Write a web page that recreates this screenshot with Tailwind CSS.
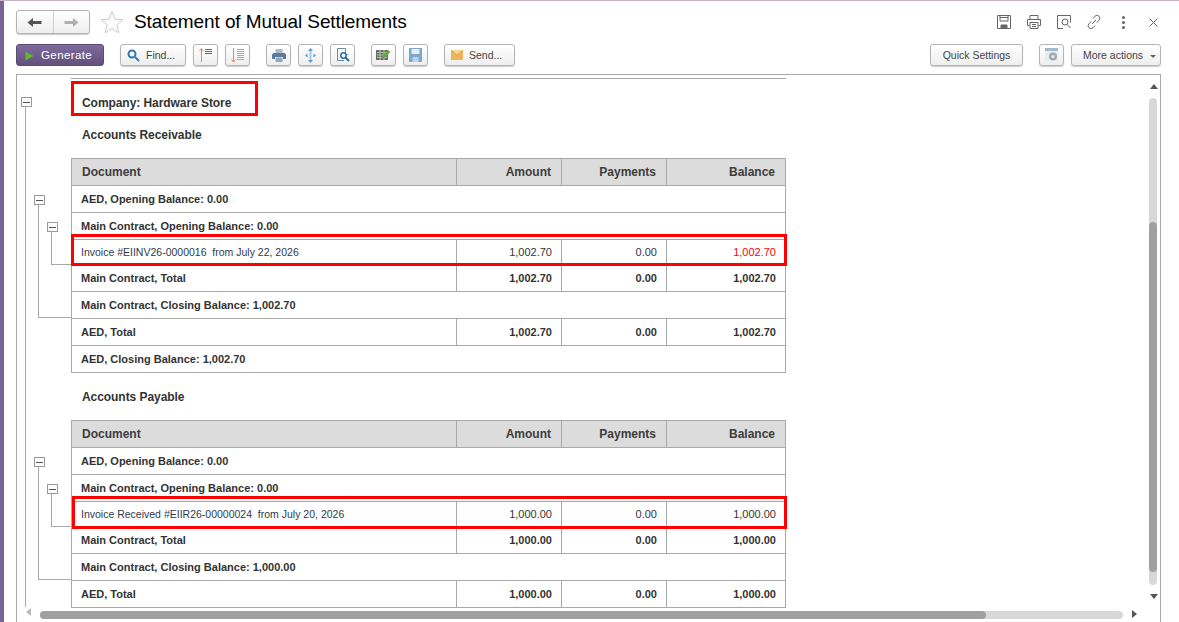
<!DOCTYPE html>
<html lang="en">
<head>
<meta charset="UTF-8">
<title>Statement of Mutual Settlements</title>
<script src="https://cdn.jsdelivr.net/npm/@tailwindcss/browser@4"></script>
</head>
<body class="bg-white">
<div class="relative flex h-[622px] w-[1179px] overflow-hidden border-t border-[#c9b4c2] bg-white font-['Liberation_Sans',Arial,sans-serif] text-[#333]">
  <div class="w-[4px] shrink-0 bg-[#7a6496]"></div>

  <div class="flex min-w-0 flex-1 flex-col pl-3 pr-[18px]">
    <!-- title bar -->
    <div class="flex h-[43px] shrink-0 items-start pt-[9px]">
      <div class="flex h-[24px] w-[74px] rounded-[3px] border border-[#b4b4b4] bg-linear-to-b from-white to-[#eeeeee] shadow-[0_1px_1px_rgba(0,0,0,.2)]">
        <div class="flex w-[37px] items-center justify-center border-r border-[#cfcfcf] pr-[1px]">
          <svg width="15" height="11" viewBox="0 0 15 11"><path d="M0.500 5.500L6 1v3h8.500v3H6v3z" fill="#555"/></svg>
        </div>
        <div class="flex flex-1 items-center justify-center">
          <svg width="15" height="11" viewBox="0 0 15 11"><path d="M14.500 5.500L9 1v3H0.500v3H9v3z" fill="#b0b0b0"/></svg>
        </div>
      </div>
      <svg class="ml-[10px]" width="24" height="24" viewBox="0 0 24 24"><path d="M12 1.500l3 7.600 8 .6-6.200 5.200 2 8-6.800-4.300-6.800 4.300 2-8L1 9.700l8-.6z" fill="#fff" stroke="#c6ccd2"/></svg>
      <h1 class="-mt-px ml-[10px] text-[19px] leading-[26px] font-normal tracking-[-0.100px] text-black">Statement of Mutual Settlements</h1>
      <div class="ml-auto mr-[-1px] flex items-center gap-[14px] pt-[4px]">
        <svg width="16" height="16" viewBox="0 0 16 16" fill="none" stroke="#666"><path d="M1.500 1.500h13v13h-13z"/><path d="M4 1.500v5.500h8V1.500M4 3.500h8"/><path d="M5 11h6v3.500H5z" fill="#666"/></svg>
        <svg width="16" height="16" viewBox="0 0 16 16" fill="none" stroke="#666"><path d="M4 5V1.500h8V5M3.500 11.500h-2v-6h13v6h-2"/><path d="M4 8.500h8v6H4zM6 10.500h4M6 12.500h4"/></svg>
        <svg width="16" height="16" viewBox="0 0 16 16" fill="none" stroke="#666"><path d="M7 14.500H1.500v-13h13v7"/><circle cx="9" cy="8" r="3"/><path d="M11 10.500l3.500 3.500"/></svg>
        <svg width="16" height="16" viewBox="0 0 16 16" fill="none" stroke="#666"><path d="M6 10l4-4M7 4.500l2-2.300c1.500-1.300 3-1 4 0s1.300 2.500 0 4l-2.200 2.300M9 11.500l-2 2.300c-1.500 1.300-3 1-4 0s-1.300-2.500 0-4l2.200-2.300"/></svg>
        <div class="ml-[3px] flex w-[8px] flex-col items-center gap-[2px]">
          <span class="h-[3px] w-[3px] rounded-full bg-[#666]"></span>
          <span class="h-[3px] w-[3px] rounded-full bg-[#666]"></span>
          <span class="h-[3px] w-[3px] rounded-full bg-[#666]"></span>
        </div>
        <svg class="ml-[8px] mr-[4px]" width="9" height="9" viewBox="0 0 9 9" stroke="#666"><path d="M.5.500l8 8M8.500.500l-8 8"/></svg>
      </div>
    </div>

    <!-- toolbar -->
    <div class="flex h-[22px] shrink-0 items-stretch text-[10.500px] text-[#444]">
      <button class="flex w-[88px] items-center rounded-[3px] border border-[#5c4a78] bg-linear-to-b from-[#7f6a9c] to-[#64507f] pl-[8px] pt-[1px] text-[11.500px] tracking-[0.400px] text-white">
        <svg width="9" height="10" viewBox="0 0 9 10"><path d="M0.500 0.500L8.500 5L0.500 9.500z" fill="#5fb52c"/></svg>
        <span class="ml-[7px]">Generate</span>
      </button>
      <button class="ml-[16px] flex w-[66px] items-center rounded-[3px] border border-[#b4b4b4] bg-linear-to-b from-white to-[#eeeeee] pl-[6px] shadow-[0_1px_1px_rgba(0,0,0,.2)]">
        <svg width="13" height="13" viewBox="0 0 13 13" fill="none" stroke="#2f78b4" stroke-width="2"><circle cx="5" cy="5" r="3.500"/><path d="M8 8l4 4"/></svg>
        <span class="ml-[6px] pt-[2px]">Find...</span>
      </button>
      <button class="ml-[7px] flex w-[25px] items-center justify-center rounded-[3px] border border-[#b4b4b4] bg-linear-to-b from-white to-[#eeeeee] shadow-[0_1px_1px_rgba(0,0,0,.2)]">
        <svg width="13" height="14" viewBox="0 0 13 14" fill="none"><path d="M2.500 14V1M.5 3l2-2.500 2 2.500" stroke="#ef8a4a"/><path d="M6 1.500h7M6 3.500h7M6 5.500h7" stroke="#666"/></svg>
      </button>
      <button class="ml-[7px] flex w-[25px] items-center justify-center rounded-[3px] border border-[#b4b4b4] bg-linear-to-b from-white to-[#eeeeee] shadow-[0_1px_1px_rgba(0,0,0,.2)]">
        <svg width="13" height="15" viewBox="0 0 13 15" fill="none"><path d="M2.500 0v14M.5 11.500l2 2.500 2-2.500" stroke="#ef8a4a"/><path d="M6 1.500h7M6 3.500h7M6 5.500h7M6 7.500h7M6 9.500h7M6 11.500h7" stroke="#aaa"/></svg>
      </button>
      <button class="ml-[16px] flex w-[25px] items-center justify-center rounded-[3px] border border-[#b4b4b4] bg-linear-to-b from-white to-[#eeeeee] shadow-[0_1px_1px_rgba(0,0,0,.2)]">
        <svg width="14" height="13" viewBox="0 0 14 13"><path d="M3.500 0h7v4h-7z" fill="#a9bacb"/><path d="M1.500 4h11l1.500 1.500V10h-3V8H3v2H0V5.500z" fill="#5d7a96"/><path d="M3.500 8.500h7V13h-7z" fill="#8fa8c0"/></svg>
      </button>
      <button class="ml-[7px] flex w-[25px] items-center justify-center rounded-[3px] border border-[#b4b4b4] bg-linear-to-b from-white to-[#eeeeee] shadow-[0_1px_1px_rgba(0,0,0,.2)]">
        <svg width="13" height="15" viewBox="0 0 13 15" fill="#5f9ac8"><path d="M6.500 0l2.500 3H4zM6.500 15L4 12h5zM1 7.500L3.500 5.500v4zM12 7.500L9.500 5.500v4z"/><path d="M5.500 3h2v9h-2z" fill="#a8c8e0"/></svg>
      </button>
      <button class="ml-[7px] flex w-[25px] items-center justify-center rounded-[3px] border border-[#b4b4b4] bg-linear-to-b from-white to-[#eeeeee] shadow-[0_1px_1px_rgba(0,0,0,.2)]">
        <svg width="14" height="14" viewBox="0 0 14 14" fill="none"><path d="M9.500.5H1.500v12H8M9.500.5V5M12 6v1" stroke="#6d8aa3"/><circle cx="7.500" cy="7.500" r="2.700" stroke="#2a6fa8" stroke-width="1.600"/><path d="M9.500 9.500l3.500 3.500" stroke="#2a6fa8" stroke-width="2"/></svg>
      </button>
      <button class="ml-[16px] flex w-[25px] items-center justify-center rounded-[3px] border border-[#b4b4b4] bg-linear-to-b from-white to-[#eeeeee] shadow-[0_1px_1px_rgba(0,0,0,.2)]">
        <svg width="15" height="14" viewBox="0 0 15 14"><path d="M0 2h12v10H0z" fill="#6b6f68"/><path d="M1 4.500h10M1 7h10M1 9.500h10M4 2v10M8 2v10" stroke="#c6c8c2" stroke-width=".8"/><path d="M5 11l2-4 5-5 2.500 2-5 5z" fill="#62ad3c"/></svg>
      </button>
      <button class="ml-[7px] flex w-[25px] items-center justify-center rounded-[3px] border border-[#b4b4b4] bg-linear-to-b from-white to-[#eeeeee] shadow-[0_1px_1px_rgba(0,0,0,.2)]">
        <svg width="13" height="14" viewBox="0 0 13 14"><path d="M0 0h13v14H0z" fill="#7fa6cc"/><path d="M2.500 1h8v5h-8z" fill="#e6eff7"/><path d="M3.500 9h6v5h-6z" fill="#bdd1e3"/></svg>
      </button>
      <button class="ml-[16px] flex w-[71px] items-center rounded-[3px] border border-[#b4b4b4] bg-linear-to-b from-white to-[#eeeeee] pl-[6px] shadow-[0_1px_1px_rgba(0,0,0,.2)]">
        <svg width="12" height="10" viewBox="0 0 12 10"><path d="M0 0h12v10H0z" fill="#eeb45c"/><path d="M0 0l6 5 6-5" fill="#f6d79a" stroke="#d39a44" stroke-width=".7"/></svg>
        <span class="ml-[6px] pt-[2px]">Send...</span>
      </button>
      <button class="ml-auto flex w-[93px] items-center justify-center rounded-[3px] border border-[#b4b4b4] bg-linear-to-b from-white to-[#eeeeee] pt-[2px] shadow-[0_1px_1px_rgba(0,0,0,.2)]">Quick Settings</button>
      <button class="ml-[16px] flex w-[25px] items-center justify-center rounded-[3px] border border-[#b4b4b4] bg-linear-to-b from-white to-[#eeeeee] shadow-[0_1px_1px_rgba(0,0,0,.2)]">
        <svg width="14" height="14" viewBox="0 0 14 14"><path d="M0 0h13v13H0z" fill="#e6edf3"/><path d="M0 0h13v3H0z" fill="#a3bacd"/><circle cx="8" cy="8.500" r="4" fill="#a5a9ae"/><circle cx="8" cy="8.500" r="1.600" fill="#ececec"/></svg>
      </button>
      <button class="ml-[7px] flex w-[90px] items-center gap-[7px] rounded-[3px] border border-[#b4b4b4] bg-linear-to-b from-white to-[#eeeeee] pl-[11px] pt-[2px] shadow-[0_1px_1px_rgba(0,0,0,.2)]">
        More actions
        <span class="h-0 w-0 border-x-[3px] border-t-[3px] border-x-transparent border-t-[#666]"></span>
      </button>
    </div>

    <!-- report frame -->
    <div class="relative mt-[8px] min-h-0 flex-1 overflow-hidden border-x border-t border-[#a9a9a9]">
      <div class="ml-[54px] w-[715px]">
        <div class="mt-[3px] h-px bg-[#a9a9a9]"></div>
        <div class="pl-[11px] pt-[17px] text-[12px] leading-[14px] font-bold tracking-[-0.060px]">Company: Hardware Store</div>
        <div class="pl-[11px] pt-[18px] text-[12px] leading-[14px] font-bold tracking-[-0.060px]">Accounts Receivable</div>

        <table class="mt-[16px] w-[714px] table-fixed border-collapse text-[11px] text-[#333]">
          <colgroup><col class="w-[385px]"><col class="w-[105px]"><col class="w-[105px]"><col class="w-[119px]"></colgroup>
          <tr class="h-[27px] bg-[#dcdcdc] text-[12px] font-bold text-[#3d3d3d]">
            <th class="border border-[#a9a9a9] pl-[10px] text-left">Document</th>
            <th class="border border-[#a9a9a9] pr-[10px] text-right">Amount</th>
            <th class="border border-[#a9a9a9] pr-[10px] text-right">Payments</th>
            <th class="border border-[#a9a9a9] pr-[10px] text-right">Balance</th>
          </tr>
          <tr class="h-[27px] font-bold"><td colspan="4" class="border border-[#a9a9a9] pl-[9px]">AED, Opening Balance: 0.00</td></tr>
          <tr class="h-[27px] font-bold"><td colspan="4" class="border border-[#a9a9a9] pl-[9px]">Main Contract, Opening Balance: 0.00</td></tr>
          <tr class="h-[26px]">
            <td class="border border-[#a9a9a9] pl-[9px] text-[10.500px] text-[#2f3a4c]">Invoice #EIINV26-0000016&nbsp; from July 22, 2026</td>
            <td class="border border-[#a9a9a9] pr-[9px] text-right">1,002.70</td>
            <td class="border border-[#a9a9a9] pr-[9px] text-right">0.00</td>
            <td class="border border-[#a9a9a9] pr-[9px] text-right text-[#ff0000]">1,002.70</td>
          </tr>
          <tr class="h-[26px] font-bold">
            <td class="border border-[#a9a9a9] pl-[9px]">Main Contract, Total</td>
            <td class="border border-[#a9a9a9] pr-[9px] text-right">1,002.70</td>
            <td class="border border-[#a9a9a9] pr-[9px] text-right">0.00</td>
            <td class="border border-[#a9a9a9] pr-[9px] text-right">1,002.70</td>
          </tr>
          <tr class="h-[27px] font-bold"><td colspan="4" class="border border-[#a9a9a9] pl-[9px]">Main Contract, Closing Balance: 1,002.70</td></tr>
          <tr class="h-[27px] font-bold">
            <td class="border border-[#a9a9a9] pl-[9px]">AED, Total</td>
            <td class="border border-[#a9a9a9] pr-[9px] text-right">1,002.70</td>
            <td class="border border-[#a9a9a9] pr-[9px] text-right">0.00</td>
            <td class="border border-[#a9a9a9] pr-[9px] text-right">1,002.70</td>
          </tr>
          <tr class="h-[27px] font-bold"><td colspan="4" class="border border-[#a9a9a9] pl-[9px]">AED, Closing Balance: 1,002.70</td></tr>
        </table>

        <div class="pl-[11px] pt-[17px] text-[12px] leading-[14px] font-bold tracking-[-0.060px]">Accounts Payable</div>

        <table class="mt-[16px] w-[714px] table-fixed border-collapse text-[11px] text-[#333]">
          <colgroup><col class="w-[385px]"><col class="w-[105px]"><col class="w-[105px]"><col class="w-[119px]"></colgroup>
          <tr class="h-[27px] bg-[#dcdcdc] text-[12px] font-bold text-[#3d3d3d]">
            <th class="border border-[#a9a9a9] pl-[10px] text-left">Document</th>
            <th class="border border-[#a9a9a9] pr-[10px] text-right">Amount</th>
            <th class="border border-[#a9a9a9] pr-[10px] text-right">Payments</th>
            <th class="border border-[#a9a9a9] pr-[10px] text-right">Balance</th>
          </tr>
          <tr class="h-[27px] font-bold"><td colspan="4" class="border border-[#a9a9a9] pl-[9px]">AED, Opening Balance: 0.00</td></tr>
          <tr class="h-[27px] font-bold"><td colspan="4" class="border border-[#a9a9a9] pl-[9px]">Main Contract, Opening Balance: 0.00</td></tr>
          <tr class="h-[26px]">
            <td class="border border-[#a9a9a9] pl-[9px] text-[10.500px] text-[#2f3a4c]">Invoice Received #EIIR26-00000024&nbsp; from July 20, 2026</td>
            <td class="border border-[#a9a9a9] pr-[9px] text-right">1,000.00</td>
            <td class="border border-[#a9a9a9] pr-[9px] text-right">0.00</td>
            <td class="border border-[#a9a9a9] pr-[9px] text-right">1,000.00</td>
          </tr>
          <tr class="h-[26px] font-bold">
            <td class="border border-[#a9a9a9] pl-[9px]">Main Contract, Total</td>
            <td class="border border-[#a9a9a9] pr-[9px] text-right">1,000.00</td>
            <td class="border border-[#a9a9a9] pr-[9px] text-right">0.00</td>
            <td class="border border-[#a9a9a9] pr-[9px] text-right">1,000.00</td>
          </tr>
          <tr class="h-[27px] font-bold"><td colspan="4" class="border border-[#a9a9a9] pl-[9px]">Main Contract, Closing Balance: 1,000.00</td></tr>
          <tr class="h-[27px] font-bold">
            <td class="border border-[#a9a9a9] pl-[9px]">AED, Total</td>
            <td class="border border-[#a9a9a9] pr-[9px] text-right">1,000.00</td>
            <td class="border border-[#a9a9a9] pr-[9px] text-right">0.00</td>
            <td class="border border-[#a9a9a9] pr-[9px] text-right">1,000.00</td>
          </tr>
        </table>
      </div>

      <!-- row grouping tree, over the report -->
      <div class="absolute left-[8px] top-[32px] h-[500px] w-px bg-[#a9a9a9]"></div>
      <div class="absolute left-[4px] top-[22px] flex h-[10px] w-[11px] items-center justify-center border border-[#999] bg-white"><span class="h-px w-[7px] bg-[#555]"></span></div>

      <div class="absolute left-[21px] top-[130px] h-[113px] w-[33px] border-b border-l border-[#a9a9a9]"></div>
      <div class="absolute left-[17px] top-[120px] flex h-[10px] w-[11px] items-center justify-center border border-[#999] bg-white"><span class="h-px w-[7px] bg-[#555]"></span></div>
      <div class="absolute left-[34px] top-[157px] h-[33px] w-[20px] border-b border-l border-[#a9a9a9]"></div>
      <div class="absolute left-[30px] top-[147px] flex h-[10px] w-[11px] items-center justify-center border border-[#999] bg-white"><span class="h-px w-[7px] bg-[#555]"></span></div>

      <div class="absolute left-[21px] top-[392px] h-[113px] w-[33px] border-b border-l border-[#a9a9a9]"></div>
      <div class="absolute left-[17px] top-[382px] flex h-[10px] w-[11px] items-center justify-center border border-[#999] bg-white"><span class="h-px w-[7px] bg-[#555]"></span></div>
      <div class="absolute left-[34px] top-[419px] h-[33px] w-[20px] border-b border-l border-[#a9a9a9]"></div>
      <div class="absolute left-[30px] top-[409px] flex h-[10px] w-[11px] items-center justify-center border border-[#999] bg-white"><span class="h-px w-[7px] bg-[#555]"></span></div>

      <!-- annotation boxes -->
      <div class="absolute left-[54px] top-[6px] h-[35px] w-[187px] border-[3px] border-[#ff0000]"></div>
      <div class="absolute left-[54px] top-[159px] h-[32px] w-[716px] border-[3px] border-[#ff0000]"></div>
      <div class="absolute left-[55px] top-[421px] h-[33px] w-[715px] border-[3px] border-[#ff0000]"></div>

      <!-- scrollbars -->
      <div class="absolute left-[1133px] top-[9px] h-0 w-0 border-x-[4px] border-b-[5px] border-x-transparent border-b-[#555]"></div>
      <div class="absolute left-[1132px] top-[23px] h-[487px] w-[8px] rounded-full bg-[#d8d8d8]"></div>
      <div class="absolute left-[1132px] top-[147px] h-[350px] w-[8px] rounded-full bg-[#a0a0a0]"></div>
      <div class="absolute left-[1133px] top-[519px] h-0 w-0 border-x-[4px] border-t-[5px] border-x-transparent border-t-[#555]"></div>
      <div class="absolute left-[9px] top-[533px] h-0 w-0 border-y-[4px] border-r-[5px] border-y-transparent border-r-[#bbb]"></div>
      <div class="absolute left-[23px] top-[536px] h-[8px] w-[1083px] rounded-full bg-[#d8d8d8]"></div>
      <div class="absolute left-[23px] top-[536px] h-[8px] w-[946px] rounded-full bg-[#a0a0a0]"></div>
      <div class="absolute left-[1115px] top-[535px] h-0 w-0 border-y-[4px] border-l-[5px] border-y-transparent border-l-[#555]"></div>
    </div>
  </div>
</div>
</body>
</html>
